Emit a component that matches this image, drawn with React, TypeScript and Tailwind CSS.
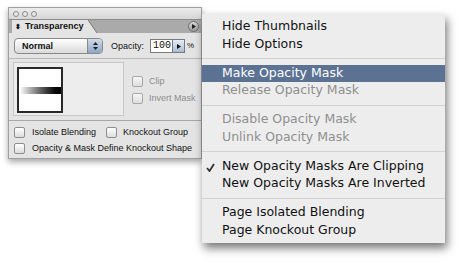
import React from 'react';

const Check: React.FC<{ className?: string }> = ({ className = '' }) => (
  <div className={`h-[11px] w-[11px] shrink-0 rounded-[2px] border border-[#8e8e8e] bg-gradient-to-b from-white to-[#dcdcdc] ${className}`} />
);

type Item = { label: string; disabled?: boolean; active?: boolean; checked?: boolean } | 'sep';

const items: Item[] = [
  { label: 'Hide Thumbnails' },
  { label: 'Hide Options' },
  'sep',
  { label: 'Make Opacity Mask', active: true },
  { label: 'Release Opacity Mask', disabled: true },
  'sep',
  { label: 'Disable Opacity Mask', disabled: true },
  { label: 'Unlink Opacity Mask', disabled: true },
  'sep',
  { label: 'New Opacity Masks Are Clipping', checked: true },
  { label: 'New Opacity Masks Are Inverted' },
  'sep',
  { label: 'Page Isolated Blending' },
  { label: 'Page Knockout Group' },
];

const App: React.FC = () => {
  return (
    <div className="relative h-[264px] w-[465px] overflow-hidden bg-white font-['Liberation_Sans',Arial,sans-serif]">
      {/* Transparency palette */}
      <div className="absolute left-[8px] top-[7px] flex h-[152px] w-[194px] flex-col whitespace-nowrap border border-[#a0a0a0] bg-[#e4e4e4] text-[9px] text-[#111] shadow-[0_3px_6px_rgba(0,0,0,0.35)]">
        {/* title bar */}
        <div className="flex h-[11px] items-center gap-[3px] bg-gradient-to-b from-[#ececec] to-[#d6d6d6] pl-[4px]">
          <div className="h-[6px] w-[6px] rounded-full border border-[#8a8a8a] bg-[#e8e8e8]" />
          <div className="h-[6px] w-[6px] rounded-full border border-[#8a8a8a] bg-[#e8e8e8]" />
          <div className="h-[6px] w-[6px] rounded-full border border-[#8a8a8a] bg-[#e8e8e8]" />
        </div>
        {/* tab row */}
        <div className="flex h-[14px] items-end border-t border-[#8c8c8c] bg-[#aaaaaa] pl-[3px]">
          <div className="flex h-[13px] items-center gap-[4px] bg-[#e4e4e4] pl-[3px] pr-[4px] font-bold">
            <span className="text-[7px] leading-none">⬍</span>
            <span className="leading-none">Transparency</span>
          </div>
          <svg width="9" height="13" viewBox="0 0 9 13" className="block">
            <polygon points="0,0 0,13 9,13" fill="#e4e4e4" />
            <line x1="0" y1="0" x2="9" y2="13" stroke="#7a7a7a" strokeWidth="1" />
          </svg>
          <div className="flex-1" />
          <div className="mb-[1px] mr-[2px] flex h-[11px] w-[11px] items-center justify-center rounded-full border border-[#6e6e6e] bg-gradient-to-b from-[#d8d8d8] to-[#9c9c9c]">
            <svg width="5" height="5" viewBox="0 0 5 5"><polygon points="1,0 5,2.5 1,5" fill="#222" /></svg>
          </div>
        </div>
        {/* controls */}
        <div className="mt-[5px] flex h-[16px] items-center pl-[5px]">
          <div className="flex h-[16px] w-[89px] overflow-hidden rounded-[4px] border border-[#8a8a8a] bg-gradient-to-b from-white to-[#dadada]">
            <span className="flex-1 pl-[7px] font-bold leading-[14px]">Normal</span>
            <div className="flex w-[15px] flex-col items-center justify-center gap-[2px] border-l border-[#8a8a8a] bg-gradient-to-b from-[#cfdcec] to-[#8ea6c4]">
              <svg width="5" height="3" viewBox="0 0 5 3"><polygon points="0,3 2.5,0 5,3" fill="#222" /></svg>
              <svg width="5" height="3" viewBox="0 0 5 3"><polygon points="0,0 5,0 2.5,3" fill="#222" /></svg>
            </div>
          </div>
          <span className="ml-[8px] leading-none">Opacity:</span>
          <div className="ml-[6px] flex h-[14px] items-center border border-[#7a7a7a] bg-white pl-[2px] pr-[1px] font-['Liberation_Mono',monospace] text-[10px] leading-none">100</div>
          <div className="flex h-[14px] w-[12px] items-center justify-center border border-l-0 border-[#7a7a7a] bg-gradient-to-b from-[#e6eef8] to-[#a9bdd6]">
            <svg width="4" height="5" viewBox="0 0 4 5"><polygon points="0,0 4,2.5 0,5" fill="#111" /></svg>
          </div>
          <span className="ml-[2px] text-[8px] leading-none">%</span>
        </div>
        <div className="mt-[4px] h-px bg-[#b8b8b8]" />
        {/* preview */}
        <div className="mt-[3px] flex items-start pl-[4px]">
          <div className="h-[54px] w-[111px] border border-[#c6c6c6] bg-[#ededed] pl-[3px] pt-[4px]">
            <div className="flex h-[46px] w-[46px] items-center border-2 border-[#2a2a2a] bg-white">
              <div className="ml-[1px] h-[7px] w-[42px] bg-gradient-to-r from-white to-black" />
            </div>
          </div>
          <div className="ml-[8px] mt-[14px] flex flex-col gap-[6px] text-[#8c8c8c]">
            <div className="flex items-center gap-[6px]"><Check className="opacity-70" /><span className="leading-none">Clip</span></div>
            <div className="flex items-center gap-[6px]"><Check className="opacity-70" /><span className="leading-none">Invert Mask</span></div>
          </div>
        </div>
        <div className="mt-[4px] h-px bg-[#a8a8a8]" />
        {/* options */}
        <div className="mt-[6px] flex flex-col gap-[5px] pl-[5px]">
          <div className="flex items-center">
            <Check />
            <span className="ml-[7px] leading-none">Isolate Blending</span>
            <Check className="ml-[10px]" />
            <span className="ml-[6px] leading-none">Knockout Group</span>
          </div>
          <div className="flex items-center">
            <Check />
            <span className="ml-[7px] leading-none">Opacity &amp; Mask Define Knockout Shape</span>
          </div>
        </div>
      </div>

      {/* flyout menu */}
      <div className="absolute left-[202px] top-[14px] flex w-[243px] flex-col bg-[#ededed] py-[4px] font-['DejaVu_Sans',sans-serif] text-[12.5px] shadow-[2px_5px_9px_rgba(0,0,0,0.55)]">
        {items.map((it, i) =>
          it === 'sep' ? (
            <div key={i} className="flex h-[11.5px] items-center">
              <div className="h-px w-full bg-[#d2d2d2]" />
            </div>
          ) : (
            <div
              key={i}
              className={`relative flex h-[17.5px] items-center pl-[20px] ${
                it.active ? 'bg-[#5b7293] text-white' : it.disabled ? 'text-[#8f8f8f]' : 'text-[#111]'
              }`}
            >
              {it.checked && (
                <svg width="9" height="9" viewBox="0 0 9 9" className="absolute left-[4px] top-[5px]">
                  <path d="M1 5 L3.5 8 L8 1" stroke="#333" strokeWidth="1.8" fill="none" />
                </svg>
              )}
              {it.label}
            </div>
          )
        )}
      </div>
    </div>
  );
};

export default App;
